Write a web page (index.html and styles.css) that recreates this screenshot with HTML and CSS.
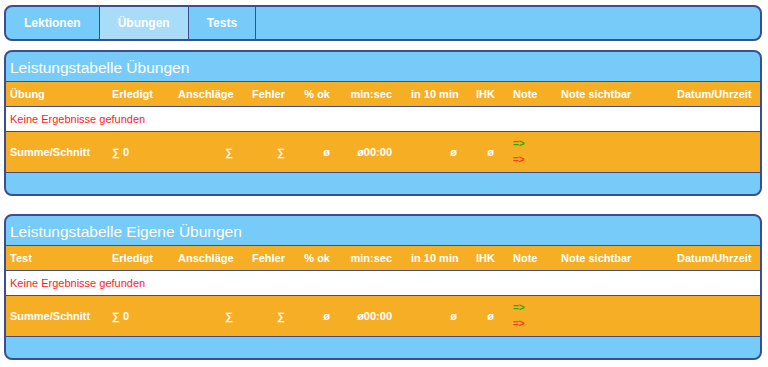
FILE: index.html
```html
<!DOCTYPE html>
<html lang="de">
<head>
    <meta charset="UTF-8">
    <meta name="viewport" content="width=device-width, initial-scale=1.0">
    <title>Leistungstabelle</title>
    <link rel="stylesheet" href="styles.css">
</head>
<body>

    <!-- Navigation -->
    <nav class="tabs">
        <a class="tab" href="#">Lektionen</a>
        <a class="tab active" href="#">Übungen</a>
        <a class="tab" href="#">Tests</a>
    </nav>

    <!-- Tabelle Übungen -->
    <div class="panel">
        <div class="panel-title">Leistungstabelle Übungen</div>
        <table class="results">
            <colgroup>
                <col class="c-name"><col class="c-done"><col class="c-keys"><col class="c-err">
                <col class="c-ok"><col class="c-time"><col class="c-ten"><col class="c-ihk">
                <col class="c-note"><col class="c-vis"><col class="c-date">
            </colgroup>
            <thead>
                <tr>
                    <th>Übung</th>
                    <th>Erledigt</th>
                    <th class="num">Anschläge</th>
                    <th class="num">Fehler</th>
                    <th class="num">% ok</th>
                    <th class="num">min:sec</th>
                    <th class="num">in 10 min</th>
                    <th class="num">IHK</th>
                    <th>Note</th>
                    <th>Note sichtbar</th>
                    <th>Datum/Uhrzeit</th>
                </tr>
            </thead>
            <tbody>
                <tr class="empty">
                    <td colspan="11">Keine Ergebnisse gefunden</td>
                </tr>
                <tr class="sum">
                    <td>Summe/Schnitt</td>
                    <td>∑ 0</td>
                    <td class="num">∑</td>
                    <td class="num">∑</td>
                    <td class="num">ø</td>
                    <td class="num">ø00:00</td>
                    <td class="num">ø</td>
                    <td class="num">ø</td>
                    <td><span class="arrow up">=&gt;</span><span class="arrow down">=&gt;</span></td>
                    <td></td>
                    <td></td>
                </tr>
            </tbody>
        </table>
        <div class="panel-foot"></div>
    </div>

    <!-- Tabelle Eigene Übungen -->
    <div class="panel">
        <div class="panel-title">Leistungstabelle Eigene Übungen</div>
        <table class="results">
            <colgroup>
                <col class="c-name"><col class="c-done"><col class="c-keys"><col class="c-err">
                <col class="c-ok"><col class="c-time"><col class="c-ten"><col class="c-ihk">
                <col class="c-note"><col class="c-vis"><col class="c-date">
            </colgroup>
            <thead>
                <tr>
                    <th>Test</th>
                    <th>Erledigt</th>
                    <th class="num">Anschläge</th>
                    <th class="num">Fehler</th>
                    <th class="num">% ok</th>
                    <th class="num">min:sec</th>
                    <th class="num">in 10 min</th>
                    <th class="num">IHK</th>
                    <th>Note</th>
                    <th>Note sichtbar</th>
                    <th>Datum/Uhrzeit</th>
                </tr>
            </thead>
            <tbody>
                <tr class="empty">
                    <td colspan="11">Keine Ergebnisse gefunden</td>
                </tr>
                <tr class="sum">
                    <td>Summe/Schnitt</td>
                    <td>∑ 0</td>
                    <td class="num">∑</td>
                    <td class="num">∑</td>
                    <td class="num">ø</td>
                    <td class="num">ø00:00</td>
                    <td class="num">ø</td>
                    <td class="num">ø</td>
                    <td><span class="arrow up">=&gt;</span><span class="arrow down">=&gt;</span></td>
                    <td></td>
                    <td></td>
                </tr>
            </tbody>
        </table>
        <div class="panel-foot"></div>
    </div>

</body>
</html>
```
FILE: styles.css
```css
body {
    font-family: "Liberation Sans", Arial, sans-serif;
    background-color: #fff;
    margin: 5px 6px 0 4px;
    padding: 0;
}
/* Navigation */
.tabs {
    display: flex;
    height: 32px;
    background-color: #77cbf8;
    border: 2px solid #3b4f8f;
    border-radius: 8px;
    overflow: hidden;
}
.tab {
    display: flex;
    align-items: center;
    padding: 0 18px;
    border-right: 1px solid #3b4f8f;
    color: #fff;
    font-size: 12px;
    font-weight: bold;
    text-decoration: none;
}
.tab.active {
    background-color: #a8dcf8;
}
/* Tabellen */
.panel {
    margin-top: 9px;
    margin-bottom: 18px;
    background-color: #77cbf8;
    border: 2px solid #3b4f8f;
    border-radius: 8px;
    overflow: hidden;
}
.panel-title {
    height: 29px;
    line-height: 31px;
    padding-left: 4px;
    color: #fff;
    font-size: 15.5px;
}
.results {
    width: 100%;
    border-collapse: collapse;
    table-layout: fixed;
    font-size: 11px;
}
.c-name { width: 102px; }
.c-done { width: 66px; }
.c-keys { width: 74px; }
.c-err { width: 52px; }
.c-ok { width: 45px; }
.c-time { width: 62px; }
.c-ten { width: 65px; }
.c-ihk { width: 37px; }
.c-note { width: 48px; }
.c-vis { width: 116px; }
.c-date { width: 87px; }
.results th,
.results td {
    padding: 0 4px;
    text-align: left;
    white-space: nowrap;
    vertical-align: middle;
}
.results .num {
    text-align: right;
    padding-right: 15px;
}
.results thead tr {
    height: 25px;
    background-color: #f6af24;
    border-top: 1px solid #3b4f8f;
    color: #fff;
}
.results tr.empty {
    height: 25px;
    background-color: #fff;
    border-top: 1px solid #3b4f8f;
    color: #ff1a1a;
}
.results tr.sum {
    height: 41px;
    background-color: #f6af24;
    border-top: 1px solid #3b4f8f;
    border-bottom: 1px solid #3b4f8f;
    color: #fff;
    font-weight: bold;
}
.arrow {
    display: block;
    font-size: 10px;
    line-height: 16px;
    font-weight: bold;
}
.arrow.up {
    color: #2ea800;
}
.arrow.down {
    color: #ff3a1a;
}
.panel-foot {
    height: 21px;
}
```
